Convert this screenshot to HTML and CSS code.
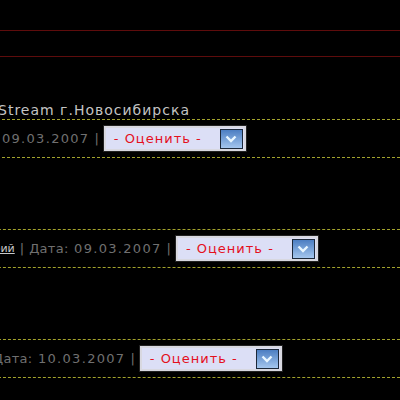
FILE: index.html
```html
<!DOCTYPE html>
<html lang="ru">
<head>
  <meta charset="UTF-8">
  <title>Комментарии</title>
  <link rel="stylesheet" href="styles.css">
</head>
<body>
  <div class="topbar"></div>

  <div class="content">
    <div class="title">Stream г.Новосибирска</div>

    <div class="comment">
      <div class="meta shift-1">
        <span class="date"><span class="date-label">Дата:</span> 09.03.2007</span>
        <span class="sep">|</span>
        <div class="rate">
          <span class="rate-label">- Оценить -</span>
          <span class="rate-btn">
            <svg width="12" height="8" viewBox="0 0 12 8"><path d="M1.5 1.5 L6 6 L10.5 1.5" fill="none" stroke="#e8f6ff" stroke-width="2.4"/></svg>
          </span>
        </div>
      </div>
      <div class="body"></div>
    </div>

    <div class="comment">
      <div class="meta shift-2">
        <a class="author" href="#">Дмитрий</a>
        <span class="sep">|</span>
        <span class="date"><span class="date-label">Дата:</span> 09.03.2007</span>
        <span class="sep">|</span>
        <div class="rate">
          <span class="rate-label">- Оценить -</span>
          <span class="rate-btn">
            <svg width="12" height="8" viewBox="0 0 12 8"><path d="M1.5 1.5 L6 6 L10.5 1.5" fill="none" stroke="#e8f6ff" stroke-width="2.4"/></svg>
          </span>
        </div>
      </div>
      <div class="body"></div>
    </div>

    <div class="comment">
      <div class="meta shift-3">
        <span class="date"><span class="date-label">Дата:</span> 10.03.2007</span>
        <span class="sep">|</span>
        <div class="rate">
          <span class="rate-label">- Оценить -</span>
          <span class="rate-btn">
            <svg width="12" height="8" viewBox="0 0 12 8"><path d="M1.5 1.5 L6 6 L10.5 1.5" fill="none" stroke="#e8f6ff" stroke-width="2.4"/></svg>
          </span>
        </div>
      </div>
      <div class="body"></div>
    </div>
  </div>
</body>
</html>
```

FILE: styles.css
```css
body {
  margin: 0;
  padding: 0;
  background-color: #000;
  font-family: "DejaVu Sans", Verdana, sans-serif;
  font-size: 13px;
  color: #c8c8c8;
  overflow: hidden;
}
.topbar {
  margin-top: 30px;
  height: 25px;
  border-top: 1px solid #5e0c0c;
  border-bottom: 1px solid #5e0c0c;
}
.content {
  padding-top: 44px;
}
.title {
  margin-left: -2px;
  height: 18px;
  line-height: 18px;
  font-size: 14px;
  letter-spacing: 1px;
  color: #c4c4c4;
}
.meta {
  display: flex;
  align-items: center;
  gap: 5px;
  height: 37px;
  border-top: 1px dashed #a4a42c;
  border-bottom: 1px dashed #a4a42c;
  white-space: nowrap;
  letter-spacing: 1.3px;
  color: #707070;
  font-size: 13px;
}
.shift-1 {
  margin-left: -43px;
}
.shift-2 {
  margin-left: -37px;
}
.shift-3 {
  margin-left: -7px;
}
.author {
  color: #c8c8c8;
  font-size: 11px;
  letter-spacing: 0;
}
.date-label {
  letter-spacing: 0.3px;
}
.sep {
  color: #707070;
  letter-spacing: 0;
}
.rate {
  display: flex;
  align-items: center;
  justify-content: space-between;
  width: 138px;
  height: 21px;
  border: 2px solid #d8d8e0;
  background-color: #dcdff6;
  box-shadow: 0 0 0 1px #222;
  letter-spacing: 1px;
}
.rate-label {
  padding-left: 8px;
  color: #e4101c;
  font-size: 13px;
}
.rate-btn {
  display: flex;
  align-items: center;
  justify-content: center;
  width: 21px;
  height: 18px;
  margin-right: 1px;
  border: 1px solid #1c2838;
  background: linear-gradient(to bottom, #4c7ec2, #a4c6ee);
}
.body {
  height: 71px;
}
```
